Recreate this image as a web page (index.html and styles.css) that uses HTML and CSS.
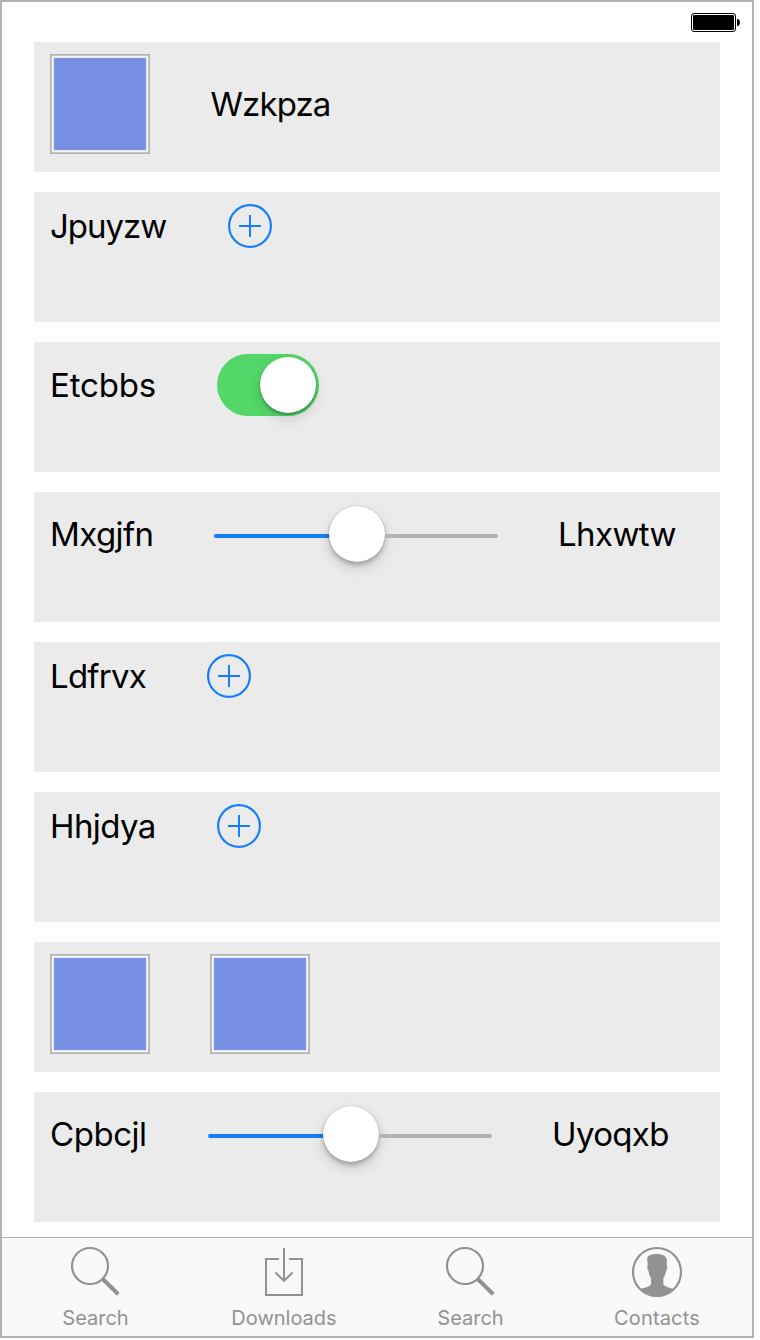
FILE: index.html
```html
<!DOCTYPE html>
<html lang="en">
<head>
<meta charset="utf-8">
<title>Controls</title>
<link rel="stylesheet" href="styles.css">
</head>
<body>
<div class="screen">
  <header class="status">
    <svg class="battery" width="50" height="20" viewBox="0 0 50 20">
      <rect x="0.5" y="0.5" width="44" height="18" rx="2.5" fill="#fff" stroke="#000"/>
      <rect x="2" y="2" width="41" height="15" rx="1" fill="#000"/>
      <path d="M46 6h1q2 .8 2 3.5t-2 3.5h-1z" fill="#000"/>
    </svg>
  </header>
  <main class="cards">
    <section class="card">
      <span class="swatch"></span>
      <span class="label wzkpza">Wzkpza</span>
    </section>
    <section class="card">
      <span class="label jpuyzw">Jpuyzw</span>
      <svg class="add" viewBox="0 0 44 44"><circle cx="22" cy="22" r="20.900"/><path d="M11 22h22M22 11v22"/></svg>
    </section>
    <section class="card">
      <span class="label etcbbs">Etcbbs</span>
      <span class="switch"><span class="knob"></span></span>
    </section>
    <section class="card">
      <span class="label mxgjfn">Mxgjfn</span>
      <span class="slider"><span class="fill"></span><span class="knob thumb"></span><span class="rest"></span></span>
      <span class="label lhxwtw">Lhxwtw</span>
    </section>
    <section class="card">
      <span class="label ldfrvx">Ldfrvx</span>
      <svg class="add" viewBox="0 0 44 44"><circle cx="22" cy="22" r="20.900"/><path d="M11 22h22M22 11v22"/></svg>
    </section>
    <section class="card">
      <span class="label hhjdya">Hhjdya</span>
      <svg class="add" viewBox="0 0 44 44"><circle cx="22" cy="22" r="20.900"/><path d="M11 22h22M22 11v22"/></svg>
    </section>
    <section class="card">
      <span class="swatch"></span>
      <span class="swatch"></span>
    </section>
    <section class="card">
      <span class="label cpbcjl">Cpbcjl</span>
      <span class="slider"><span class="fill"></span><span class="knob thumb"></span><span class="rest"></span></span>
      <span class="label uyoqxb">Uyoqxb</span>
    </section>
  </main>
  <nav class="tabs">
    <div class="tab">
      <svg class="icon" viewBox="0 0 64 52"><circle cx="27" cy="20" r="18"/><path d="M39.700 33l15.600 15.300" stroke-width="4"/></svg>
      <span class="caption search">Search</span>
    </div>
    <div class="tab">
      <svg class="icon" viewBox="0 0 64 52"><path d="M28 13H15v36h36V13H38M33 2v32M24.5 26.5l8.5 8.3 8.5-8.3"/></svg>
      <span class="caption downloads">Downloads</span>
    </div>
    <div class="tab">
      <svg class="icon" viewBox="0 0 64 52"><circle cx="27" cy="20" r="18"/><path d="M39.700 33l15.600 15.300" stroke-width="4"/></svg>
      <span class="caption search">Search</span>
    </div>
    <div class="tab">
      <svg class="icon" viewBox="0 0 64 52"><circle cx="32" cy="26" r="24"/><path class="solid" d="M22.2 12C23 9 27 8 31 8c6 0 10 1.600 10.800 5.500V20c.8.6.4 3.200-.7 5-.8 4-1.600 5.500-2.800 7v6.500c2 2.500 6 3 10 4.500-4.300 4.800-9.800 7.500-16.300 7.500S20 48 15.700 43c4-1.500 8.500-2 10.300-4.500V32c-1.200-1.500-2-3.500-2.500-7-1.200-1.500-1.700-4.400-.8-5z"/></svg>
      <span class="caption contacts">Contacts</span>
    </div>
  </nav>
</div>
</body>
</html>
```
FILE: styles.css
```css
* { box-sizing: border-box; }
body {
  margin: 0;
  background: #fff;
  font-family: Inter, "Liberation Sans", sans-serif;
}
.screen {
  display: flex;
  flex-direction: column;
  width: 754px;
  height: 1338px;
  border: 2px solid #b2b2b2;
  background: #fff;
}
.status {
  display: flex;
  justify-content: flex-end;
  height: 40px;
  padding: 11px 11px 0 0;
}
.cards {
  display: flex;
  flex-direction: column;
  gap: 20px;
  padding: 0 32px;
}
.card {
  display: flex;
  align-items: center;
  align-content: flex-start;
  flex-wrap: wrap;
  gap: 60px;
  height: 130px;
  padding: 12px 16px 0;
  background: #ebebeb;
}
.label {
  font-size: 33px;
  line-height: 40px;
  white-space: nowrap;
  color: #000;
}
.wzkpza { width: 121px; padding-left: 0.5px; letter-spacing: -0.9px; }
.jpuyzw { width: 118px; letter-spacing: -1px; }
.etcbbs { width: 107px; letter-spacing: -0.15px; }
.mxgjfn { width: 104px; letter-spacing: -0.6px; }
.lhxwtw { width: 119px; letter-spacing: -0.6px; }
.ldfrvx { width: 97px; letter-spacing: -0.75px; }
.hhjdya { width: 107px; letter-spacing: -0.6px; }
.cpbcjl { width: 98px; letter-spacing: -0.45px; }
.uyoqxb { width: 119px; letter-spacing: -0.65px; }
.swatch {
  width: 100px;
  height: 100px;
  border: 1px solid #b4b4b4;
  background: #768fe2;
  box-shadow: inset 0 0 0 1px #c4c4c4, inset 0 0 0 2px #f5f6fa, inset 0 0 0 3px #dfe5f8, inset 0 0 0 4px #8298e5;
}
.add {
  width: 44px;
  height: 44px;
  fill: none;
  stroke: #147efb;
  stroke-width: 2;
}
.add circle { stroke-width: 2.2; }
.switch {
  display: flex;
  align-items: center;
  justify-content: flex-end;
  width: 102px;
  height: 62px;
  padding-right: 3px;
  border-radius: 31px;
  background: #53d769;
}
.knob {
  flex: none;
  width: 56px;
  height: 56px;
  border-radius: 50%;
  background: #fff;
  box-shadow: 0 2px 3px rgba(0, 0, 0, .28), 0 5px 14px rgba(0, 0, 0, .14);
}
.slider {
  display: flex;
  align-items: center;
  width: 284px;
  height: 60px;
}
.thumb {
  box-shadow: 0 0 1px rgba(0, 0, 0, .35), 0 3px 4px rgba(0, 0, 0, .22), 0 6px 14px rgba(0, 0, 0, .14);
}
.fill, .rest {
  height: 4px;
  margin-top: 4px;
}
.fill { flex: 0 0 115px; background: #147efb; border-radius: 2px 0 0 2px; }
.rest { flex: 1; background: #b4b4b4; border-radius: 0 2px 2px 0; }
.tabs {
  display: grid;
  grid-template-columns: 186px 190px 184px 190px;
  height: 99px;
  margin-top: auto;
  padding-top: 8px;
  border-top: 1px solid #b2b2b2;
  background: #f9f9f9;
}
.tab {
  display: flex;
  flex-direction: column;
  align-items: center;
}
.icon {
  width: 64px;
  height: 52px;
  fill: none;
  stroke: #929292;
  stroke-width: 2;
}
.icon circle { stroke-width: 2.2; }
.solid { fill: #929292; stroke: none; }
.caption {
  margin-top: 8px;
  font-size: 20px;
  line-height: 24px;
  white-space: nowrap;
  color: #929292;
}
.search { padding-left: 1px; }
.downloads { padding-left: 2px; }
.contacts { letter-spacing: 0.15px; }
```
